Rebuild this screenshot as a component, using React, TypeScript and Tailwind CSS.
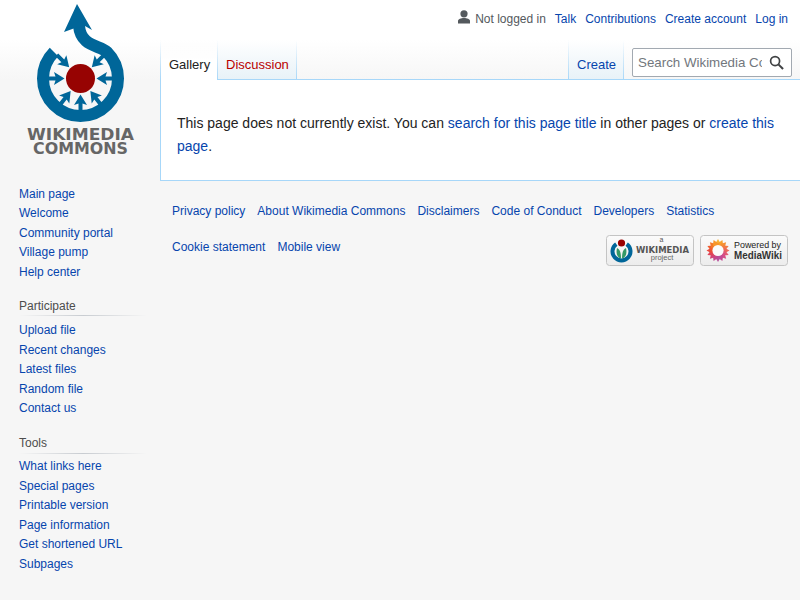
import React from "react";

const A = ({ children, red }: { children: React.ReactNode; red?: boolean }) => (
  <a href="#" className={red ? "text-[#ba0000]" : "text-[#0645ad]"}>{children}</a>
);

const Sep = () => <div className="w-px shrink-0 bg-gradient-to-b from-[#a7d7f900] to-[#a7d7f9]" />;

function Logo() {
  const angles = [-142, -90, -45, 45, 90, 142, 180];
  return (
    <svg width="160" height="160" viewBox="0 0 160 160" className="block">
      <path d="M54 52 A37.5 37.5 0 1 0 107 52 C100 45 81 47 79 26" fill="none" stroke="#006699" strokeWidth="12" />
      <polygon points="77,4 92,30 85,26 75,28 64,32" fill="#006699" />
      <circle cx="80.5" cy="78.5" r="14.5" fill="#970302" />
      {angles.map((a) => (
        <g key={a} transform={`rotate(${a} 80.5 78.5)`}>
          <polygon points="78.5,45 82.5,45 82.5,53.5 87,52 80.5,62.5 74,52 78.5,53.5" fill="#006699" />
        </g>
      ))}
      <text x="27" y="139.5" textLength="107" lengthAdjust="spacingAndGlyphs" fontFamily="'DejaVu Sans', sans-serif" fontWeight="700" fontSize="15" fill="#666666">WIKIMEDIA</text>
      <text x="33" y="154" textLength="95" lengthAdjust="spacingAndGlyphs" fontFamily="'DejaVu Sans', sans-serif" fontWeight="700" fontSize="15" fill="#666666">COMMONS</text>
    </svg>
  );
}

function Portal({ title, items, outer, inner }: { title?: string; items: string[]; outer?: string; inner?: string }) {
  return (
    <div className={outer}>
      {title && (
        <div className="relative pl-[19px] h-[19.5px] leading-[19.5px] text-[#4d4d4d]">
          {title}
          <div className="absolute left-[19px] w-[128px] bottom-0 h-px bg-gradient-to-r from-[#c8ccd100] via-[#c8ccd1] to-[#c8ccd100]" />
        </div>
      )}
      <ul className={`pl-[19px] ${inner ?? ""}`}>
        {items.map((t) => (
          <li key={t} className="leading-[19.5px] h-[19.5px]"><A>{t}</A></li>
        ))}
      </ul>
    </div>
  );
}

function WikimediaBadge() {
  return (
    <svg width="88" height="31" viewBox="0 0 88 31" className="block">
      <defs>
        <linearGradient id="bg1" x1="0" y1="0" x2="0" y2="1"><stop offset="0" stopColor="#fbfbfb" /><stop offset="1" stopColor="#ececec" /></linearGradient>
      </defs>
      <rect x="0.5" y="0.5" width="87" height="30" rx="3" fill="url(#bg1)" stroke="#c4c4c4" />
      <path d="M10.3 9.1 A9 9 0 1 0 20.7 9.1" fill="none" stroke="#006699" strokeWidth="4" />
      <path d="M15 23.5 C10.5 22.5 10 17 11 13 C13.5 14 15 17 15 23.5Z" fill="#339966" />
      <path d="M16 23.5 C20.5 22.5 21 17 20 13 C17.5 14 16 17 16 23.5Z" fill="#339966" />
      <circle cx="15.5" cy="8" r="3.6" fill="#990000" />
      <text x="55.5" y="7" textAnchor="middle" fontFamily="'Liberation Sans', sans-serif" fontSize="7" fill="#555">a</text>
      <text x="30" y="17.5" textLength="53" lengthAdjust="spacingAndGlyphs" fontFamily="'DejaVu Sans', sans-serif" fontWeight="700" fontSize="8" fill="#555">WIKIMEDIA</text>
      <text x="56" y="25" textAnchor="middle" fontFamily="'Liberation Sans', sans-serif" fontSize="7.5" fill="#666">project</text>
    </svg>
  );
}

function MediaWikiBadge() {
  const cols = ["#f9b233", "#f7a12d", "#f58e32", "#f27a45", "#ec6a5a", "#e25a72", "#d64f86", "#c64a92", "#b8509c", "#c2488f", "#d14478", "#df4459", "#e94b3f", "#ef5d2f", "#f37729", "#f7952a"];
  return (
    <svg width="88" height="31" viewBox="0 0 88 31" className="block">
      <defs>
        <linearGradient id="bg2" x1="0" y1="0" x2="0" y2="1"><stop offset="0" stopColor="#fbfbfb" /><stop offset="1" stopColor="#ececec" /></linearGradient>
      </defs>
      <rect x="0.5" y="0.5" width="87" height="30" rx="3" fill="url(#bg2)" stroke="#c4c4c4" />
      {cols.map((c, i) => (
        <g key={i} transform={`rotate(${i * 22.5} 18 15.5)`}>
          <polygon points="18,4 20.6,8.5 18,15.5 15.4,8.5" fill={c} />
          <polygon points="18,15.5 15.4,8.5 18,7 20.6,8.5 22,9" fill={c} />
        </g>
      ))}
      <circle cx="18" cy="15.5" r="5.6" fill="#fbfbfb" />
      <text x="34" y="13" textLength="47" lengthAdjust="spacingAndGlyphs" fontFamily="'Liberation Sans', sans-serif" fontSize="9.5" fill="#222">Powered by</text>
      <text x="34" y="24" textLength="48" lengthAdjust="spacingAndGlyphs" fontFamily="'Liberation Sans', sans-serif" fontWeight="700" fontSize="10" fill="#333">MediaWiki</text>
    </svg>
  );
}

export default function App() {
  return (
    <div className="h-[600px] overflow-hidden flex bg-[linear-gradient(#ffffff_0,#ffffff_40px,#f6f6f6_80px)] font-['Liberation_Sans',Arial,sans-serif] text-[12px]">
      <aside className="w-[160px] shrink-0">
        <div className="h-[184.5px]"><Logo /></div>
        <Portal items={["Main page", "Welcome", "Community portal", "Village pump", "Help center"]} />
        <Portal outer="mt-[14.5px]" inner="mt-[5px]" title="Participate" items={["Upload file", "Recent changes", "Latest files", "Random file", "Contact us"]} />
        <Portal outer="mt-[15.5px]" inner="mt-[3.5px]" title="Tools" items={["What links here", "Special pages", "Printable version", "Page information", "Get shortened URL", "Subpages"]} />
      </aside>
      <main className="flex-1 min-w-0">
        <div className="h-[40px] pt-[10px] pr-[12px] flex justify-end gap-[9px] leading-[18px]">
          <span className="flex items-start text-[#54595d]">
            <svg width="12" height="14" viewBox="0 0 12 14" className="mr-[5px]" fill="#54595d">
              <circle cx="6" cy="3.8" r="3.6" />
              <path d="M0 13.5 V11 C0 9 3 8 6 8 C9 8 12 9 12 11 V13.5Z" />
            </svg>
            Not logged in
          </span>
          <A>Talk</A>
          <A>Contributions</A>
          <A>Create account</A>
          <A>Log in</A>
        </div>
        <div className="h-[40px] flex text-[13px]">
          <Sep />
          <div className="w-[56px] pl-[8px] pt-[16px] leading-[17px] text-[#222] bg-gradient-to-b from-white/0 to-white to-50%">Gallery</div>
          <Sep />
          <div className="w-[78px] pl-[8px] pt-[16px] leading-[17px] border-b border-[#a7d7f9] bg-gradient-to-b from-white to-[#e8f2f8]"><A red>Discussion</A></div>
          <Sep />
          <div className="flex-1 border-b border-[#a7d7f9]" />
          <Sep />
          <div className="w-[54px] pl-[8px] pt-[16px] leading-[17px] border-b border-[#a7d7f9] bg-gradient-to-b from-white to-[#e8f2f8]"><A>Create</A></div>
          <Sep />
          <div className="w-[176px] border-b border-[#a7d7f9] pl-[8px] pr-[8px] pt-[8px]">
            <div className="h-[29px] bg-white border border-[#a2a9b1] rounded-[2px] flex items-center pl-[5px] text-[#72777d]">
              <div className="w-[124px] overflow-hidden whitespace-nowrap leading-[17px] text-[13.33px]">Search Wikimedia Commons</div>
              <svg width="15" height="15" viewBox="0 0 16 16" className="ml-[7px]" fill="none" stroke="#404244" strokeWidth="1.8">
                <circle cx="6.5" cy="6.5" r="4.8" />
                <path d="M10 10 L15 15" strokeWidth="2.2" />
              </svg>
            </div>
          </div>
        </div>
        <div className="bg-white border-l border-b border-[#a7d7f9] h-[101px] pl-[16px] pr-[24px] pt-[32.4px] text-[14px] leading-[22.4px] text-[#222]">
          This page does not currently exist. You can <A>search for this page title</A> in other pages or <A>create this page</A>.
        </div>
        <footer className="pl-[12px] pr-[12px] pt-[21px]">
          <div className="flex gap-[12px] leading-[18px]">
            <A>Privacy policy</A><A>About Wikimedia Commons</A><A>Disclaimers</A><A>Code of Conduct</A><A>Developers</A><A>Statistics</A>
          </div>
          <div className="flex justify-between mt-[15px]">
            <div className="flex gap-[12px] leading-[18px] pt-[3px]">
              <A>Cookie statement</A><A>Mobile view</A>
            </div>
            <div className="flex gap-[6px]">
              <WikimediaBadge />
              <MediaWikiBadge />
            </div>
          </div>
        </footer>
      </main>
    </div>
  );
}
